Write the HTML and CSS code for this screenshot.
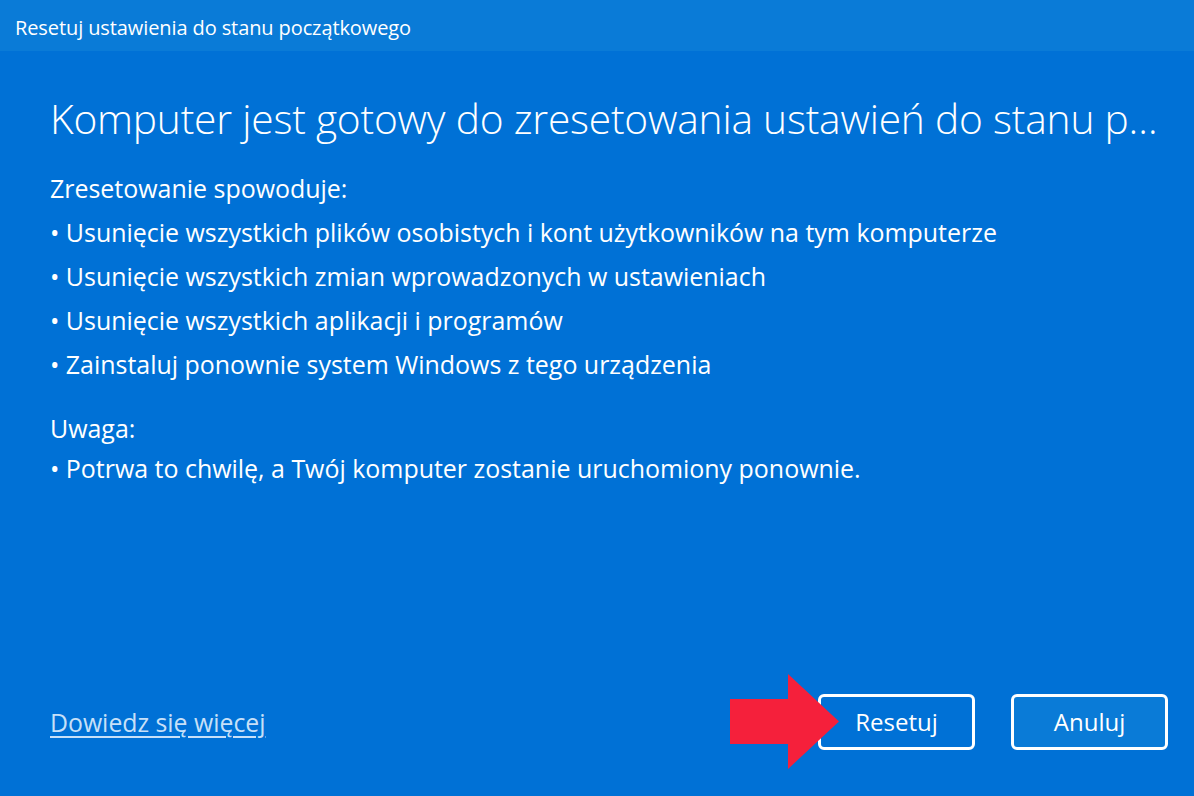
FILE: index.html
```html
<!DOCTYPE html>
<html lang="pl">
<head>
<meta charset="utf-8">
<title>Resetuj ustawienia do stanu początkowego</title>
<link rel="stylesheet" href="styles.css">
</head>
<body>
<div class="window">
  <div class="titlebar">Resetuj ustawienia do stanu początkowego</div>
  <div class="main">
    <h1 class="heading">Komputer jest gotowy do zresetowania ustawień do stanu p…</h1>
    <div class="content">
      <p class="line">Zresetowanie spowoduje:</p>
      <p class="line">• Usunięcie wszystkich plików osobistych i kont użytkowników na tym komputerze</p>
      <p class="line">• Usunięcie wszystkich zmian wprowadzonych w ustawieniach</p>
      <p class="line">• Usunięcie wszystkich aplikacji i programów</p>
      <p class="line">• Zainstaluj ponownie system Windows z tego urządzenia</p>
      <p class="line gap">Uwaga:</p>
      <p class="line tight">• Potrwa to chwilę, a Twój komputer zostanie uruchomiony ponownie.</p>
    </div>
    <div class="footer">
      <a class="link" href="#">Dowiedz się więcej</a>
      <div class="buttons">
        <button class="btn btn-primary">Resetuj</button>
        <button class="btn btn-secondary">Anuluj</button>
      </div>
    </div>
  </div>
  <svg class="arrow" width="110" height="96" viewBox="0 0 110 96" aria-hidden="true">
    <polygon points="0,25 58,25 58,0 109,47.5 58,95 58,70 0,70" fill="#f5203b"/>
  </svg>
</div>
</body>
</html>
```

FILE: styles.css
```css
* { box-sizing: border-box; }
html, body {
  margin: 0;
  padding: 0;
  width: 1194px;
  height: 796px;
  overflow: hidden;
}
body {
  font-family: "Open Sans", "Noto Sans", "DejaVu Sans", sans-serif;
  color: #ffffff;
  background: #0071d6;
}
.window {
  position: relative;
  width: 1194px;
  height: 796px;
  display: flex;
  flex-direction: column;
}
.titlebar {
  height: 51px;
  flex: none;
  background: #0a7bd7;
  display: flex;
  align-items: center;
  padding-left: 15px;
  padding-top: 4px;
  font-size: 20px;
  letter-spacing: -0.1px;
}
.main {
  flex: 1;
  background: #0071d6;
  display: flex;
  flex-direction: column;
  padding: 0 26px 46px 50px;
}
.heading {
  margin: 37px 0 0 0;
  font-weight: 300;
  font-size: 40.7px;
  line-height: 60px;
  white-space: nowrap;
  letter-spacing: -0.2px;
}
.content {
  margin-top: 18px;
  flex: 1;
}
.line {
  margin: 0;
  font-size: 24.95px;
  line-height: 44px;
  white-space: nowrap;
}
.line.gap { margin-top: 20px; }
.line.tight { margin-top: -4px; }
.footer {
  display: flex;
  align-items: center;
  justify-content: space-between;
}
.link {
  color: #c7e0f8;
  font-size: 24.8px;
  text-decoration: underline;
  text-underline-offset: 4px;
  text-decoration-thickness: 1.5px;
}
.buttons {
  display: flex;
  gap: 36px;
}
.btn {
  width: 157px;
  height: 56px;
  border: 3px solid #ffffff;
  border-radius: 6px;
  color: #ffffff;
  font-family: inherit;
  font-size: 24px;
  padding: 0 0 2px 0;
}
.btn-primary { background: #0071d6; }
.btn-secondary { background: #0a7bd7; }
.arrow {
  position: absolute;
  left: 730px;
  top: 674px;
}
```
